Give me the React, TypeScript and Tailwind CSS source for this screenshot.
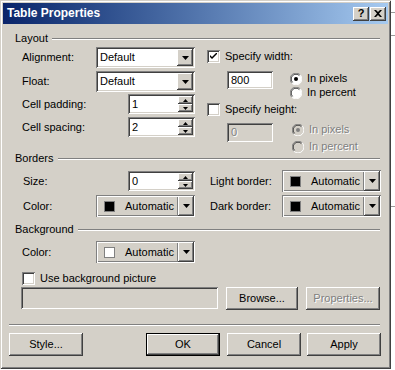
import React from "react";

const raised =
  "shadow-[inset_-1px_-1px_0_#404040,inset_1px_1px_0_#ffffff,inset_-2px_-2px_0_#808080,inset_2px_2px_0_#d4d0c8]";
const sunken =
  "shadow-[inset_1px_1px_0_#808080,inset_-1px_-1px_0_#ffffff,inset_2px_2px_0_#404040,inset_-2px_-2px_0_#d4d0c8]";
const disabledText = "text-[#808080] [text-shadow:1px_1px_0_#ffffff]";

const DownArrow = () => (
  <svg width="7" height="4" viewBox="0 0 7 4">
    <path d="M0 0h7L3.5 4z" fill="#000" />
  </svg>
);

const DropBtn = () => (
  <div className={`flex w-[16px] shrink-0 items-center justify-center bg-[#d4d0c8] ${raised}`}>
    <DownArrow />
  </div>
);

const Select = ({ value }: { value: string }) => (
  <div className={`flex h-[21px] w-[99px] bg-white p-[2px] ${sunken}`}>
    <div className="flex-1 pl-[2px] leading-[17px]">{value}</div>
    <DropBtn />
  </div>
);

const Spinner = ({ value, w = "w-[67px]" }: { value: string; w?: string }) => (
  <div className={`flex h-[20px] ${w} bg-white p-[2px] ${sunken}`}>
    <div className="flex-1 pl-[2px] leading-[16px]">{value}</div>
    <div className="flex w-[15px] flex-col">
      <div className={`flex flex-1 items-center justify-center bg-[#d4d0c8] ${raised}`}>
        <svg width="5" height="3" viewBox="0 0 5 3">
          <path d="M2.5 0L5 3H0z" fill="#000" />
        </svg>
      </div>
      <div className={`flex flex-1 items-center justify-center bg-[#d4d0c8] ${raised}`}>
        <svg width="5" height="3" viewBox="0 0 5 3">
          <path d="M0 0h5L2.5 3z" fill="#000" />
        </svg>
      </div>
    </div>
  </div>
);

const ColorPick = ({ swatch }: { swatch: string }) => (
  <div className="flex h-[22px] w-[99px] p-px shadow-[inset_1px_1px_0_#808080,inset_-1px_-1px_0_#ffffff]">
    <div className="flex flex-1 items-center shadow-[inset_1px_1px_0_#ffffff,inset_-1px_-1px_0_#808080]">
      <div className={`ml-[7px] h-[11px] w-[11px] border border-[#808080] ${swatch}`} />
      <span className="ml-[10px]">Automatic</span>
    </div>
    <DropBtn />
  </div>
);

const Check = ({ checked = false }: { checked?: boolean }) => (
  <div className={`flex h-[13px] w-[13px] shrink-0 items-center justify-center bg-white ${sunken}`}>
    {checked && (
      <svg width="7" height="7" viewBox="0 0 7 7">
        <path d="M0 2v2l2 2 5-5V-1L2 4z" fill="#000" />
      </svg>
    )}
  </div>
);

const Radio = ({ checked = false, disabled = false }: { checked?: boolean; disabled?: boolean }) => (
  <svg width="12" height="12" viewBox="0 0 12 12" className="shrink-0">
    <circle cx="6" cy="6" r="5.5" fill={disabled ? "#d4d0c8" : "#ffffff"} />
    <path d="M10.2 1.8A5.5 5.5 0 0 0 1.8 10.2" stroke="#808080" fill="none" />
    <path d="M9.4 2.6A4.5 4.5 0 0 0 2.6 9.4" stroke="#404040" fill="none" />
    <path d="M1.8 10.2A5.5 5.5 0 0 0 10.2 1.8" stroke="#ffffff" fill="none" />
    {checked && <circle cx="6" cy="6" r="2" fill={disabled ? "#808080" : "#000"} />}
  </svg>
);

const RadioRow = ({ label, checked, disabled }: { label: string; checked?: boolean; disabled?: boolean }) => (
  <div className="flex h-[13px] items-center">
    <Radio checked={checked} disabled={disabled} />
    <span className={`ml-[5px] ${disabled ? disabledText : ""}`}>{label}</span>
  </div>
);

const Group = ({ title }: { title: string }) => (
  <div className="ml-[12px] mr-[8px] flex h-[13px] items-center">
    <span className="pr-[4px]">{title}</span>
    <div className="h-[2px] flex-1 border-t border-b border-t-[#808080] border-b-white" />
  </div>
);

const Button = ({ label, w = "w-[74px]", disabled = false, def = false }: { label: string; w?: string; disabled?: boolean; def?: boolean }) => (
  <div className={`h-[23px] ${w} ${def ? "border border-black" : ""}`}>
    <div className={`flex h-full items-center justify-center bg-[#d4d0c8] ${raised} ${disabled ? disabledText : ""}`}>
      {label}
    </div>
  </div>
);

export default function App() {
  return (
    <div className="flex h-[370px] w-[395px] bg-white font-['Liberation_Sans',Arial,sans-serif] text-[11px] leading-[13px] text-black">
      {/* Dialog */}
      <div className="flex h-[369px] w-[391px] flex-col bg-[#d4d0c8] p-px shadow-[inset_1px_1px_0_#d4d0c8,inset_-1px_-1px_0_#404040,inset_2px_2px_0_#ffffff,inset_-2px_-2px_0_#808080]">
        <div className="flex flex-1 flex-col p-[2px]">
          {/* Title bar */}
          <div className="flex h-[21px] items-center bg-linear-to-r from-[#0a246a] to-[#a6caf0] pl-[4px] pr-[2px]">
            <span className="flex-1 text-[12px] font-bold text-white">Table Properties</span>
            <div className={`flex h-[14px] w-[16px] items-center justify-center bg-[#d4d0c8] text-[11px] font-bold ${raised}`}>?</div>
            <div className={`ml-px flex h-[14px] w-[16px] items-center justify-center bg-[#d4d0c8] ${raised}`}>
              <svg width="8" height="7" viewBox="0 0 8 7">
                <path d="M0 0h2l2 2 2-2h2L5 3.5 8 7H6L4 5 2 7H0l3-3.5z" fill="#000" />
              </svg>
            </div>
          </div>

          {/* Layout */}
          <div className="mt-[8px]">
            <Group title="Layout" />
          </div>
          <div className="mt-[2px] flex">
            <div className="ml-[19px] flex w-[173px] flex-col">
              <div className="flex h-[21px] items-center">
                <span className="w-[74px]">Alignment:</span>
                <Select value="Default" />
              </div>
              <div className="mt-[3px] flex h-[21px] items-center">
                <span className="w-[74px]">Float:</span>
                <Select value="Default" />
              </div>
              <div className="mt-[2px] flex h-[20px] items-center">
                <span className="w-[106px]">Cell padding:</span>
                <Spinner value="1" />
              </div>
              <div className="mt-[3px] flex h-[20px] items-center">
                <span className="w-[106px]">Cell spacing:</span>
                <Spinner value="2" />
              </div>
            </div>
            <div className="ml-[12px] flex flex-col">
              <div className="mt-[3px] flex h-[13px] items-center">
                <Check checked />
                <span className="ml-[5px]">Specify width:</span>
              </div>
              <div className="mt-[8px] flex items-start">
                <div className={`ml-[20px] h-[18px] w-[46px] bg-white pl-[4px] leading-[18px] ${sunken}`}>800</div>
                <div className="ml-[17px] mt-px flex flex-col gap-px">
                  <RadioRow label="In pixels" checked />
                  <RadioRow label="In percent" />
                </div>
              </div>
              <div className="mt-[4px] flex h-[13px] items-center">
                <Check />
                <span className="ml-[5px]">Specify height:</span>
              </div>
              <div className="mt-[7px] flex items-start">
                <div className={`ml-[20px] h-[19px] w-[46px] bg-[#d4d0c8] pl-[4px] leading-[19px] ${sunken} ${disabledText}`}>0</div>
                <div className="ml-[19px] flex flex-col gap-[4px]">
                  <RadioRow label="In pixels" checked disabled />
                  <RadioRow label="In percent" disabled />
                </div>
              </div>
            </div>
          </div>

          {/* Borders */}
          <div className="mt-[-1px]">
            <Group title="Borders" />
          </div>
          <div className="mt-[5px] flex">
            <div className="ml-[20px] flex w-[172px] flex-col">
              <div className="flex h-[22px] items-center">
                <span className="w-[105px]">Size:</span>
                <Spinner value="0" />
              </div>
              <div className="mt-[3px] flex h-[22px] items-center">
                <span className="w-[73px]">Color:</span>
                <ColorPick swatch="bg-black" />
              </div>
            </div>
            <div className="ml-[15px] flex flex-col">
              <div className="flex h-[22px] items-center">
                <span className="w-[72px]">Light border:</span>
                <ColorPick swatch="bg-black" />
              </div>
              <div className="mt-[3px] flex h-[22px] items-center">
                <span className="w-[72px]">Dark border:</span>
                <ColorPick swatch="bg-black" />
              </div>
            </div>
          </div>

          {/* Background */}
          <div className="mt-[6px]">
            <Group title="Background" />
          </div>
          <div className="ml-[19px] mt-[5px] flex h-[22px] items-center">
            <span className="w-[74px]">Color:</span>
            <ColorPick swatch="bg-white" />
          </div>
          <div className="ml-[19px] mt-[9px] flex h-[13px] items-center">
            <Check />
            <span className="ml-[5px]">Use background picture</span>
          </div>
          <div className="ml-[18px] mt-[2px] flex h-[22px]">
            <div className={`w-[197px] bg-[#d4d0c8] ${sunken}`} />
            <div className="ml-[8px]">
              <Button label="Browse..." w="w-[72px]" />
            </div>
            <div className="ml-[8px]">
              <Button label="Properties..." disabled />
            </div>
          </div>

          {/* Separator */}
          <div className="ml-[6px] mr-[8px] mt-[15px] h-[2px] border-t border-b border-t-[#808080] border-b-white" />

          {/* Buttons */}
          <div className="ml-[6px] mt-[7px] flex">
            <Button label="Style..." />
            <div className="ml-[63px]">
              <Button label="OK" def />
            </div>
            <div className="ml-[7px]">
              <Button label="Cancel" />
            </div>
            <div className="ml-[6px]">
              <Button label="Apply" />
            </div>
          </div>
        </div>
      </div>

      {/* Page behind the dialog */}
      <div className="flex flex-1 flex-col">
        <div className="mt-[12px] h-px bg-[#9a9a9a]" />
        <div className="mt-[22px] h-px bg-[#9a9a9a]" />
        <div className="mt-[170px] h-px bg-[#9a9a9a]" />
      </div>
    </div>
  );
}
